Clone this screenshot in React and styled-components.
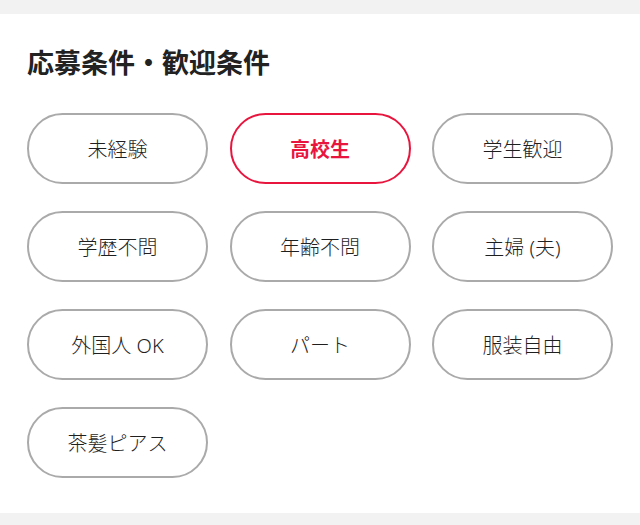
import React from "react";
import styled, { createGlobalStyle } from "styled-components";

const Global = createGlobalStyle`
  html, body { margin: 0; padding: 0; background: #f2f2f2; }
  body { font-family: "Noto Sans", "Noto Sans CJK JP", sans-serif; }
`;

const Page = styled.div`
  padding: 14px 0 0;
  width: 640px;
  min-height: 525px;
  box-sizing: border-box;
  background: #f2f2f2;
`;

const Panel = styled.section`
  background: #ffffff;
  padding: 34px 27px 35px;
`;

const Title = styled.h2`
  margin: 0 0 35px 0;
  font-size: 27px;
  line-height: 30px;
  font-weight: 600;
  color: #222222;
`;

const Grid = styled.div`
  display: grid;
  grid-template-columns: repeat(3, 181px);
  column-gap: 21.5px;
  row-gap: 27px;
`;

const Tag = styled.div`
  height: 71px;
  box-sizing: border-box;
  border-radius: 36px;
  border: ${(p) => (p.$active ? "2.5px solid #e8163e" : "2px solid #aaaaaa")};
  display: flex;
  align-items: center;
  justify-content: center;
  font-size: 20px;
  font-weight: ${(p) => (p.$active ? 700 : 300)};
  color: ${(p) => (p.$active ? "#e8163e" : "#1f1f1f")};
  background: #fff;
`;

const items = [
  ["未経験", false],
  ["高校生", true],
  ["学生歓迎", false],
  ["学歴不問", false],
  ["年齢不問", false],
  ["主婦 (夫)", false],
  ["外国人 OK", false],
  ["パート", false],
  ["服装自由", false],
  ["茶髪ピアス", false],
];

export default function App() {
  return (
    <Page>
      <Global />
      <Panel>
        <Title>応募条件・歓迎条件</Title>
        <Grid>
          {items.map(([label, active]) => (
            <Tag key={label} $active={active}>
              {label}
            </Tag>
          ))}
        </Grid>
      </Panel>
    </Page>
  );
}
